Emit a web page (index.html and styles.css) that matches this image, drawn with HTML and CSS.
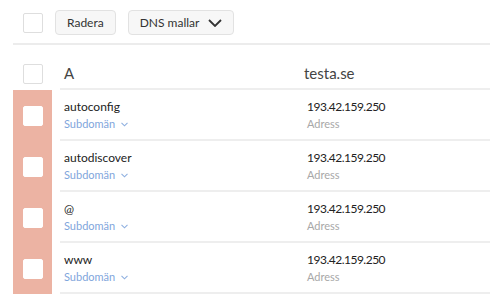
FILE: index.html
```html
<!DOCTYPE html>
<html lang="sv">
<head>
    <meta charset="UTF-8">
    <title>DNS</title>
    <link rel="stylesheet" href="styles.css">
</head>
<body>
    <div class="toolbar">
        <span class="checkbox"></span>
        <button class="btn">Radera</button>
        <button class="btn">DNS mallar
            <svg width="14" height="8" viewBox="0 0 14 8"><path d="M1 1l6 6 6-6" fill="none" stroke="#333" stroke-width="1.8"/></svg>
        </button>
    </div>

    <div class="table">
        <div class="row head">
            <div class="check-cell"><span class="checkbox"></span></div>
            <div class="row-body">
                <div class="col-name">A</div>
                <div class="col-value">testa.se</div>
            </div>
        </div>

        <div class="row selected">
            <div class="check-cell"><span class="checkbox"></span></div>
            <div class="row-body">
                <div class="col-name">
                    <div class="name">autoconfig</div>
                    <div class="type">Subdomän <svg width="7" height="5" viewBox="0 0 7 5"><path d="M.5 .8l3 3 3-3" fill="none" stroke="#8fb0e0" stroke-width="1.1"/></svg></div>
                </div>
                <div class="col-value">
                    <div class="value">193.42.159.250</div>
                    <div class="label">Adress</div>
                </div>
            </div>
        </div>

        <div class="row selected">
            <div class="check-cell"><span class="checkbox"></span></div>
            <div class="row-body">
                <div class="col-name">
                    <div class="name">autodiscover</div>
                    <div class="type">Subdomän <svg width="7" height="5" viewBox="0 0 7 5"><path d="M.5 .8l3 3 3-3" fill="none" stroke="#8fb0e0" stroke-width="1.1"/></svg></div>
                </div>
                <div class="col-value">
                    <div class="value">193.42.159.250</div>
                    <div class="label">Adress</div>
                </div>
            </div>
        </div>

        <div class="row selected">
            <div class="check-cell"><span class="checkbox"></span></div>
            <div class="row-body">
                <div class="col-name">
                    <div class="name">@</div>
                    <div class="type">Subdomän <svg width="7" height="5" viewBox="0 0 7 5"><path d="M.5 .8l3 3 3-3" fill="none" stroke="#8fb0e0" stroke-width="1.1"/></svg></div>
                </div>
                <div class="col-value">
                    <div class="value">193.42.159.250</div>
                    <div class="label">Adress</div>
                </div>
            </div>
        </div>

        <div class="row selected">
            <div class="check-cell"><span class="checkbox"></span></div>
            <div class="row-body">
                <div class="col-name">
                    <div class="name">www</div>
                    <div class="type">Subdomän <svg width="7" height="5" viewBox="0 0 7 5"><path d="M.5 .8l3 3 3-3" fill="none" stroke="#8fb0e0" stroke-width="1.1"/></svg></div>
                </div>
                <div class="col-value">
                    <div class="value">193.42.159.250</div>
                    <div class="label">Adress</div>
                </div>
            </div>
        </div>
    </div>
</body>
</html>
```

FILE: styles.css
```css
body {
    margin: 0;
    font-family: Lato, "Liberation Sans", sans-serif;
    background: #fff;
    color: #222;
}
.checkbox {
    display: block;
    width: 18px;
    height: 18px;
    border: 1px solid #dedede;
    border-radius: 2px;
    background: #fff;
}
.toolbar {
    display: flex;
    align-items: center;
    gap: 12px;
    height: 45px;
    margin: 0 10px 0 13px;
    padding: 2px 0 0 10px;
    border-bottom: 2px solid #ececec;
    box-sizing: border-box;
}
.btn {
    display: flex;
    align-items: center;
    gap: 9px;
    height: 25px;
    padding: 0 11px;
    font-family: inherit;
    font-size: 12px;
    color: #333;
    background: #f7f7f7;
    border: 1px solid #e2e2e2;
    border-radius: 4px;
}
.table {
    margin: 0 10px 0 13px;
}
.row {
    display: flex;
    height: 51px;
}
.row.head {
    height: 45px;
}
.check-cell {
    width: 39px;
    display: flex;
    align-items: center;
    justify-content: center;
}
.head .check-cell {
    padding-top: 12px;
}
.row.selected .check-cell {
    background: #ecb3a3;
}
.row.selected .checkbox {
    border-color: #fff;
}
.row-body {
    flex: 1;
    margin-left: 8px;
    display: flex;
    align-items: center;
    border-bottom: 2px solid #eeeeee;
}
.col-name {
    width: 243px;
    padding-left: 4px;
}
.col-value {
    flex: 1;
}
.head .row-body {
    padding-top: 12px;
    font-size: 15px;
    color: #444;
}
.head .col-value {
    margin-left: -3px;
}
.name, .value {
    font-size: 12px;
    color: #222;
}
.value {
    letter-spacing: -0.5px;
}
.type {
    margin-top: 3px;
    font-size: 11px;
    color: #7fa6dc;
}
.type svg {
    margin-left: 3px;
    vertical-align: 1px;
}
.label {
    margin-top: 3px;
    font-size: 11px;
    color: #a8a8a8;
}
```
